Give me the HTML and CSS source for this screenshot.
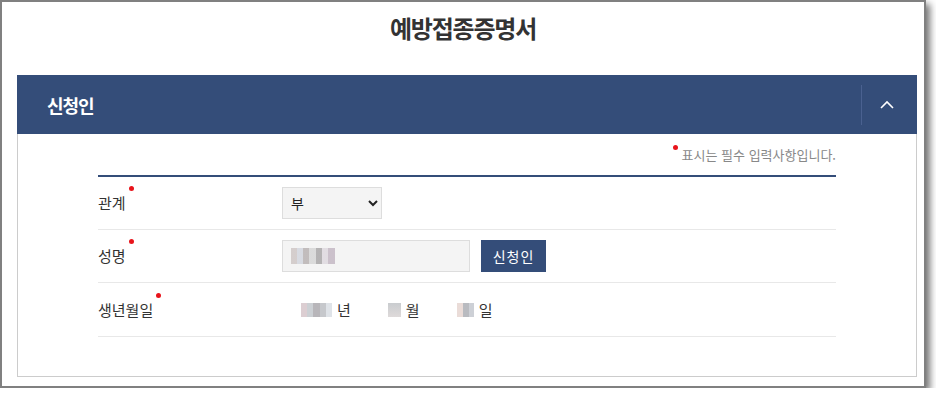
FILE: index.html
```html
<!DOCTYPE html>
<html lang="ko">
<head>
    <meta charset="UTF-8">
    <meta name="viewport" content="width=device-width, initial-scale=1.0">
    <title>예방접종증명서</title>
    <link rel="stylesheet" href="styles.css">
</head>
<body>
    <div class="window">
        <h1 class="page-title">예방접종증명서</h1>

        <div class="panel">
            <div class="panel-head">
                <h2>신청인</h2>
                <button type="button" class="toggle" aria-label="접기">
                    <svg width="14" height="9" viewBox="0 0 14 9"><path d="M1 8 L7 2 L13 8" fill="none" stroke="#fff" stroke-width="1.6"/></svg>
                </button>
            </div>

            <div class="panel-body">
                <p class="note"><span class="dot"></span>표시는 필수 입력사항입니다.</p>

                <div class="form-table">
                    <div class="row">
                        <div class="label">관계<span class="dot"></span></div>
                        <div class="field">
                            <select class="select">
                                <option>부</option>
                                <option>모</option>
                            </select>
                        </div>
                    </div>
                    <div class="row">
                        <div class="label">성명<span class="dot"></span></div>
                        <div class="field">
                            <div class="input"><span class="blur blur-name"></span></div>
                            <button type="button" class="btn">신청인</button>
                        </div>
                    </div>
                    <div class="row row-birth">
                        <div class="label">생년월일<span class="dot"></span></div>
                        <div class="field birth">
                            <span class="part"><span class="blur blur-year"></span>년</span>
                            <span class="part"><span class="blur blur-month"></span>월</span>
                            <span class="part"><span class="blur blur-day"></span>일</span>
                        </div>
                    </div>
                </div>
            </div>
        </div>
    </div>
</body>
</html>
```

FILE: styles.css
```css
body {
    margin: 0;
    padding: 0;
    background-color: #fff;
    font-family: "Noto Sans CJK KR", "Noto Sans", sans-serif;
    color: #333;
}

.window {
    box-sizing: border-box;
    width: 926px;
    height: 388px;
    border: 2px solid #808080;
    background-color: #fff;
    box-shadow: 4px 4px 7px rgba(0, 0, 0, 0.55);
    padding-top: 8px;
}

.page-title {
    margin: 0;
    text-align: center;
    font-size: 24px;
    font-weight: 700;
    letter-spacing: -1.2px;
    line-height: 36px;
    color: #333;
}

.panel {
    width: 900px;
    margin: 29px 0 0 15px;
}

.panel-head {
    display: flex;
    align-items: center;
    justify-content: space-between;
    height: 59px;
    background-color: #344d79;
}

.panel-head h2 {
    margin: 0 0 0 30px;
    color: #fff;
    font-size: 18px;
    font-weight: 700;
    letter-spacing: -1px;
}

.toggle {
    display: flex;
    align-items: center;
    justify-content: center;
    width: 56px;
    height: 40px;
    padding: 0 6px 0 0;
    border: none;
    border-left: 1px solid #4a6190;
    background: none;
}

.panel-body {
    height: 242px;
    border: 1px solid #ccc;
    border-top: none;
    padding: 0 80px;
}

.note {
    margin: 0;
    padding-top: 12px;
    height: 29px;
    text-align: right;
    font-size: 13px;
    color: #888;
    line-height: 18px;
}

.dot {
    display: inline-block;
    width: 5px;
    height: 5px;
    border-radius: 50%;
    background-color: #e8141b;
    vertical-align: top;
    margin-top: -2px;
}

.note .dot {
    margin-right: 4px;
    margin-top: -1px;
}

.form-table {
    border-top: 2px solid #344d79;
}

.row {
    display: flex;
    align-items: center;
    height: 52px;
    border-bottom: 1px solid #e8e8e8;
}

.row-birth {
    height: 53px;
}

.label {
    width: 184px;
    font-size: 15px;
    line-height: 20px;
}

.label .dot {
    margin-left: 3px;
    margin-top: -7px;
}

.field {
    display: flex;
    align-items: center;
    gap: 11px;
}

.select {
    width: 100px;
    height: 32px;
    padding: 0 4px;
    border: 1px solid #ddd;
    background-color: #f4f4f4;
    font-family: "Noto Sans CJK KR", sans-serif;
    font-size: 14px;
    color: #222;
}

.input {
    box-sizing: border-box;
    width: 188px;
    height: 32px;
    display: flex;
    align-items: center;
    padding-left: 8px;
    border: 1px solid #ddd;
    background-color: #f4f4f4;
}

.btn {
    width: 65px;
    height: 32px;
    border: none;
    background-color: #344d79;
    color: #fff;
    font-family: "Noto Sans CJK KR", sans-serif;
    font-size: 14px;
    letter-spacing: 1px;
}

.birth {
    gap: 0;
    padding-left: 19px;
    font-size: 15px;
}

.part {
    display: flex;
    align-items: center;
    gap: 5px;
}

.part + .part {
    margin-left: 37px;
}

.blur {
    display: inline-block;
    height: 14px;
}

.blur-name {
    width: 44px;
    height: 16px;
    background:
        linear-gradient(90deg, #cfc7c6 0 14%, #d3d6de 14% 28%, #b9b3b3 28% 42%, #d6d6d6 42% 57%, #a9a7a8 57% 71%, #ded9df 71% 85%, #c4b8c4 85%);
    opacity: 0.85;
}

.blur-year {
    width: 31px;
    background:
        linear-gradient(90deg, #dcced2 0 20%, #ccd0d4 20% 40%, #b8b6ba 40% 60%, #c6c8cc 60% 80%, #dfe3e8 80%);
}

.blur-month {
    width: 13px;
    background: linear-gradient(#c9cccf, #dedada);
}

.blur-day {
    width: 17px;
    background: linear-gradient(90deg, #eadcd8 0 35%, #b9bbc0 35% 70%, #cdd0d6 70%);
}
```
